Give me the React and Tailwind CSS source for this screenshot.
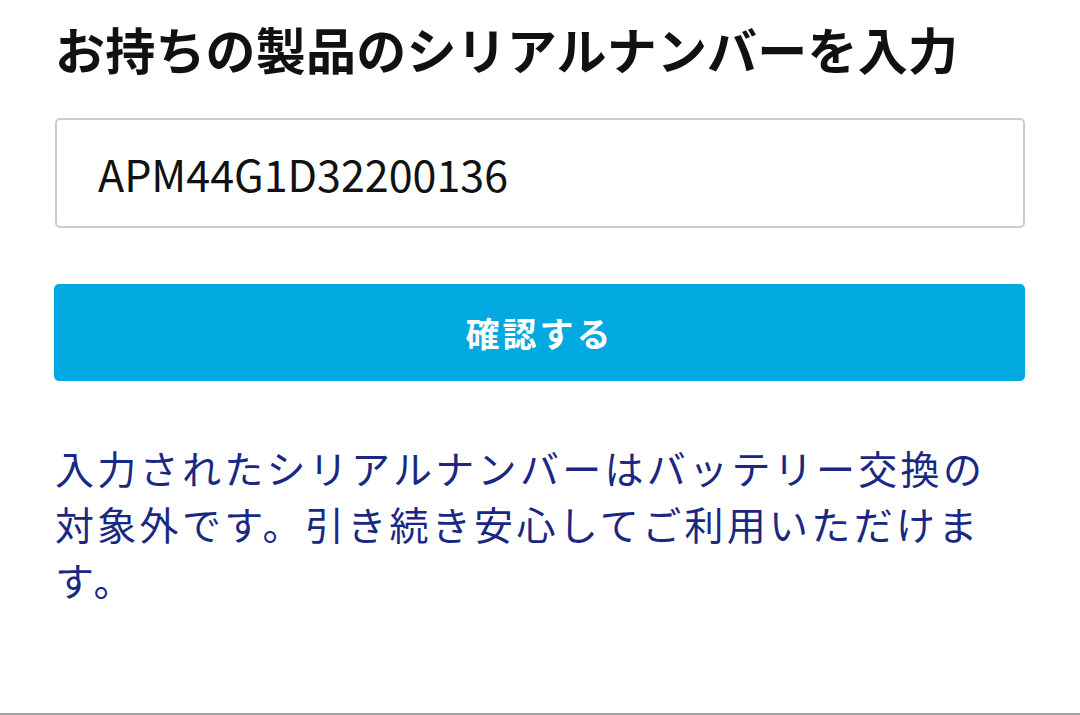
export default function App() {
  const jp = { fontFamily: '"Noto Sans CJK JP", "Noto Sans", sans-serif' };
  return (
    <div
      className="w-[1080px] h-[715px] bg-white border-b-2 border-[#a3a3a3] px-[55px] pt-[23px] flex flex-col"
      style={jp}
    >
      <h1 className="text-[50px] leading-none font-bold text-[#111111] whitespace-nowrap tracking-[0.2px]">
        お持ちの製品のシリアルナンバーを入力
      </h1>
      <div className="mt-[45px] h-[110px] w-[970px] border-2 border-[#cccccc] rounded-[5px] flex items-center pl-[41px]">
        <span className="text-[43px] leading-none text-[#111111]">APM44G1D32200136</span>
      </div>
      <button className="mt-[56px] h-[97px] w-[971px] -ml-px rounded-[5px] bg-[#02a8e0] flex items-center justify-center">
        <span className="text-[34px] leading-none font-bold text-white tracking-[3px]">確認する</span>
      </button>
      <p className="mt-[58px] w-[945px] text-[39px] leading-[56px] tracking-[3.3px] text-[#1a2883]">
        入力されたシリアルナンバーはバッテリー交換の対象外です。引き続き安心してご利用いただけます。
      </p>
    </div>
  );
}
